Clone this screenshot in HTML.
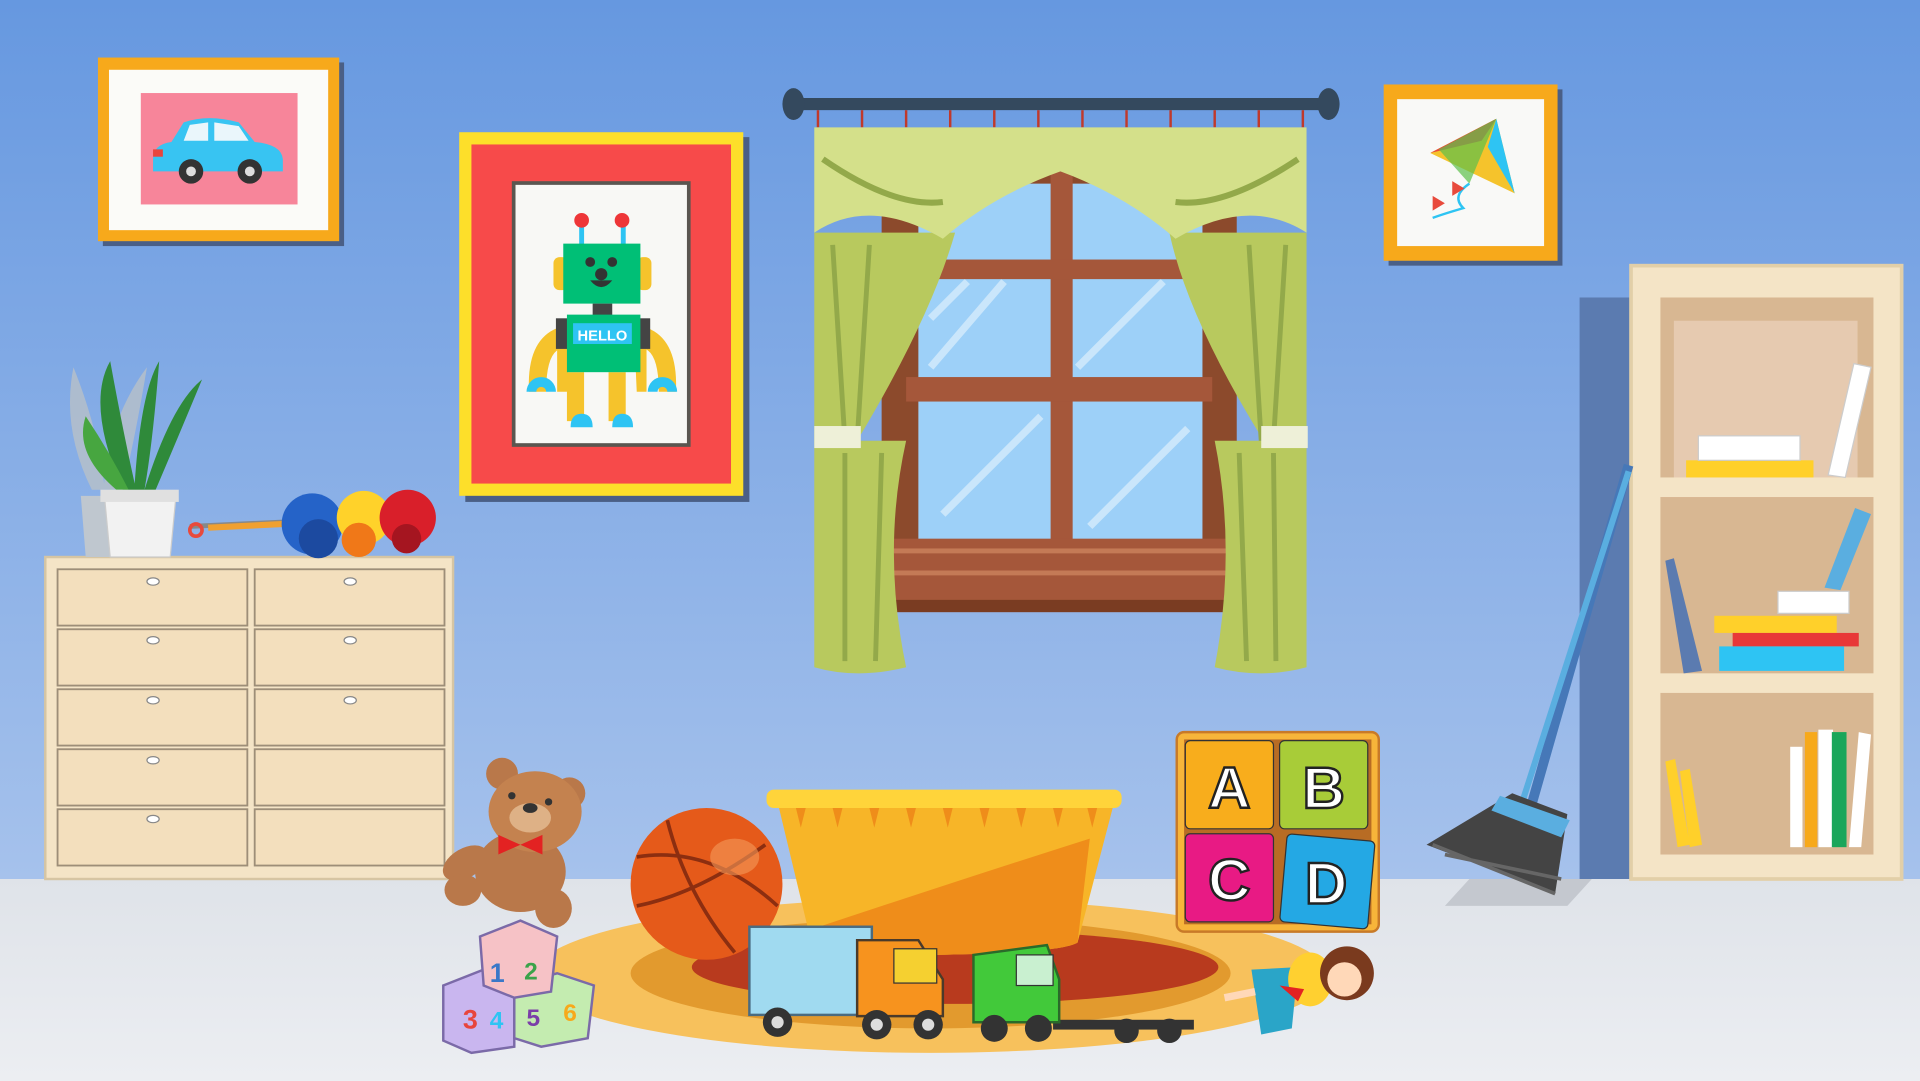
<!DOCTYPE html>
<html><head><meta charset="utf-8"><style>
html,body{margin:0;padding:0;width:1920px;height:1081px;overflow:hidden;background:#e6e9ee}
svg{display:block}
text{font-family:"Liberation Sans",sans-serif;font-weight:bold}
</style></head><body>
<svg width="1920" height="1081" viewBox="0 0 1568 883" preserveAspectRatio="none" xmlns="http://www.w3.org/2000/svg">
<defs>
<linearGradient id="wall" x1="0" y1="0" x2="0" y2="1"><stop offset="0" stop-color="#6698e0"/><stop offset="1" stop-color="#a6c2ec"/></linearGradient>
<linearGradient id="floor" x1="0" y1="0" x2="0" y2="1"><stop offset="0" stop-color="#dfe3e9"/><stop offset="1" stop-color="#eceef2"/></linearGradient>
</defs>
<rect width="1568" height="720" fill="url(#wall)"/>
<rect y="718" width="1568" height="165" fill="url(#floor)"/>

<!-- car frame -->
<rect x="84" y="51" width="197" height="150" fill="#4a5f86"/>
<rect x="80" y="47" width="197" height="150" fill="#f7a91b"/>
<rect x="89" y="57" width="179" height="131" fill="#fbfbf8"/>
<rect x="115" y="76" width="128" height="91" fill="#f7859a"/>
<path d="M125 130 Q125 118 140 116 L150 100 Q170 93 195 100 L208 116 Q230 118 231 130 L231 140 L125 140Z" fill="#38c4f2"/>
<path d="M155 102 L170 100 L170 115 L150 115Z M175 100 L195 103 L203 115 L175 115Z" fill="#eaf6fb"/>
<rect x="125" y="122" width="8" height="6" fill="#e8453c"/>
<circle cx="156" cy="140" r="10" fill="#333"/><circle cx="156" cy="140" r="4" fill="#ddd"/>
<circle cx="204" cy="140" r="10" fill="#333"/><circle cx="204" cy="140" r="4" fill="#ddd"/>

<!-- robot frame -->
<rect x="380" y="112" width="232" height="298" fill="#4a5f86"/>
<rect x="375" y="108" width="232" height="297" fill="#fddf2a"/>
<rect x="385" y="118" width="212" height="277" fill="#f74a4a"/>
<rect x="418" y="148" width="146" height="217" fill="#5a5650"/>
<rect x="421" y="151" width="140" height="211" fill="#f8f8f5"/>
<line x1="583" y1="0" x2="583" y2="0"/>
<rect x="473" y="185" width="4" height="15" fill="#2ec4f3"/><rect x="507" y="185" width="4" height="15" fill="#2ec4f3"/>
<circle cx="475" cy="180" r="6" fill="#ee3638"/><circle cx="508" cy="180" r="6" fill="#ee3638"/>
<rect x="452" y="210" width="12" height="27" rx="5" fill="#f5c32c"/><rect x="520" y="210" width="12" height="27" rx="5" fill="#f5c32c"/>
<rect x="460" y="199" width="63" height="49" fill="#00bf76"/>
<circle cx="482" cy="214" r="4" fill="#333"/><circle cx="500" cy="214" r="4" fill="#333"/><circle cx="491" cy="224" r="5" fill="#333"/>
<path d="M482 229 Q491 240 500 229Z" fill="#333"/>
<rect x="484" y="248" width="16" height="10" fill="#444"/>
<path d="M455 320 L455 275 Q455 260 465 260 L465 275 L463 320Z M528 320 L528 275 Q528 260 518 260 L518 275 L520 320Z" fill="#f5c32c"/>
<path d="M432 320 Q430 278 455 268 L457 285 Q446 290 446 320Z M552 320 Q554 278 529 268 L527 285 Q538 290 538 320Z" fill="#f5c32c"/>
<rect x="454" y="260" width="10" height="25" fill="#444"/><rect x="521" y="260" width="10" height="25" fill="#444"/>
<rect x="463" y="304" width="14" height="40" fill="#f5c32c"/><rect x="497" y="304" width="14" height="40" fill="#f5c32c"/>
<path d="M430 320 A12 12 0 0 1 454 320 L446 320 A4 4 0 0 0 438 320Z M529 320 A12 12 0 0 1 553 320 L545 320 A4 4 0 0 0 537 320Z" fill="#2ec4f3"/>
<path d="M466 349 Q466 338 475 338 Q484 338 484 349Z M500 349 Q500 338 508 338 Q517 338 517 349Z" fill="#2ec4f3"/>
<rect x="463" y="257" width="60" height="47" fill="#00bf76"/>
<rect x="468" y="264" width="48" height="17" fill="#2ec4f3"/>
<text x="492" y="278" font-size="12" fill="#fff" text-anchor="middle">HELLO</text>

<!-- kite frame -->
<rect x="1134" y="73" width="142" height="144" fill="#4a5f86"/>
<rect x="1130" y="69" width="142" height="144" fill="#f7a91b"/>
<rect x="1141" y="81" width="120" height="120" fill="#f9f9f7"/>
<path d="M1168 125 L1222 97 L1237 158Z" fill="#f5c32c"/>
<path d="M1168 125 L1222 97 L1210 115Z" fill="#e84a3c"/>
<path d="M1222 97 L1237 158 L1215 120Z" fill="#2ec4f3"/>
<path d="M1175 122 L1222 97 L1200 150Z" fill="#5cc14a" opacity="0.7"/>
<path d="M1200 150 Q1185 160 1195 170 Q1178 175 1170 178" stroke="#2ec4f3" stroke-width="2" fill="none"/>
<path d="M1170 160 l10 6 -10 6z M1186 148 l10 6 -10 6z" fill="#e84a3c"/>

<!-- curtain rod -->
<rect x="645" y="80" width="443" height="10" rx="4" fill="#34495e"/>
<ellipse cx="648" cy="85" rx="9" ry="13" fill="#34495e"/><ellipse cx="1085" cy="85" rx="9" ry="13" fill="#34495e"/>
<g stroke="#c0392b" stroke-width="2"><line x1="668" y1="90" x2="668" y2="104"/><line x1="704" y1="90" x2="704" y2="104"/><line x1="740" y1="90" x2="740" y2="104"/><line x1="776" y1="90" x2="776" y2="104"/><line x1="812" y1="90" x2="812" y2="104"/><line x1="848" y1="90" x2="848" y2="104"/><line x1="884" y1="90" x2="884" y2="104"/><line x1="920" y1="90" x2="920" y2="104"/><line x1="956" y1="90" x2="956" y2="104"/><line x1="992" y1="90" x2="992" y2="104"/><line x1="1028" y1="90" x2="1028" y2="104"/><line x1="1064" y1="90" x2="1064" y2="104"/></g>

<!-- window -->
<rect x="720" y="140" width="290" height="330" fill="#8c4a2c"/>
<rect x="750" y="150" width="232" height="292" fill="#9dd0f8"/>
<g stroke="#d6ecfc" stroke-width="6" opacity="0.8"><line x1="760" y1="300" x2="820" y2="230"/><line x1="770" y1="420" x2="850" y2="340"/><line x1="880" y1="300" x2="950" y2="230"/><line x1="890" y1="430" x2="970" y2="350"/><line x1="760" y1="260" x2="790" y2="230"/></g>
<rect x="858" y="140" width="18" height="305" fill="#a5573a"/>
<rect x="740" y="212" width="250" height="16" fill="#a5573a"/>
<rect x="740" y="308" width="250" height="20" fill="#a5573a"/>
<rect x="728" y="440" width="275" height="60" fill="#a5573a"/>
<rect x="728" y="448" width="275" height="4" fill="#c47a56"/>
<rect x="728" y="466" width="275" height="4" fill="#c47a56"/>
<rect x="728" y="490" width="275" height="10" fill="#7a3c22"/>

<!-- curtains -->
<path d="M665 190 L665 545 Q700 555 740 545 Q720 450 740 360 L700 360 Q760 260 780 190Z" fill="#b8c95e"/>
<path d="M680 200 L690 360 M710 200 L700 360 M690 370 L690 540 M720 370 L715 540" stroke="#93a94a" stroke-width="4" fill="none"/>
<path d="M1067 190 L1067 545 Q1030 555 992 545 Q1010 450 992 360 L1032 360 Q970 260 955 190Z" fill="#b8c95e"/>
<path d="M1050 200 L1040 360 M1020 200 L1030 360 M1040 370 L1042 540 M1012 370 L1018 540" stroke="#93a94a" stroke-width="4" fill="none"/>
<rect x="665" y="348" width="38" height="18" fill="#eef0d8"/><rect x="1030" y="348" width="38" height="18" fill="#eef0d8"/>
<path d="M665 104 L1067 104 L1067 190 Q1020 160 960 195 Q920 160 866 140 Q810 160 770 195 Q710 160 665 190Z" fill="#d4e08a"/>
<path d="M672 130 Q730 170 770 165 M1060 130 Q1000 170 960 165" stroke="#93a94a" stroke-width="5" fill="none"/>

<!-- bookshelf -->
<rect x="1290" y="243" width="45" height="475" fill="#5b7bb0"/>
<rect x="1332" y="217" width="221" height="501" fill="#f4e4c6" stroke="#e2cfa8" stroke-width="3"/>
<rect x="1356" y="243" width="174" height="455" fill="#d8b792"/>
<rect x="1367" y="262" width="150" height="130" fill="#e6cab0"/>
<rect x="1340" y="390" width="205" height="16" fill="#f4e4c6"/>
<rect x="1340" y="550" width="205" height="16" fill="#f4e4c6"/>
<rect x="1377" y="376" width="104" height="14" fill="#ffd02a"/>
<rect x="1387" y="356" width="83" height="20" fill="#fff" stroke="#ccc"/>
<path d="M1493 388 L1514 297 L1528 300 L1507 390Z" fill="#fff" stroke="#ccc"/>
<path d="M1375 550 L1360 458 L1367 456 L1390 548Z" fill="#5b7bb0"/>
<rect x="1400" y="503" width="100" height="14" fill="#ffd02a"/>
<rect x="1415" y="517" width="103" height="11" fill="#e83838"/>
<rect x="1404" y="528" width="102" height="20" fill="#2ec4f3"/>
<rect x="1452" y="483" width="58" height="18" fill="#fff" stroke="#ccc"/>
<path d="M1490 480 L1515 415 L1528 420 L1503 482Z" fill="#5aaee0"/>
<path d="M1370 692 L1360 622 L1368 620 L1380 690Z M1380 692 L1372 630 L1380 628 L1390 690Z" fill="#ffd02a"/>
<rect x="1462" y="610" width="10" height="82" fill="#fff"/><rect x="1474" y="598" width="10" height="94" fill="#f7a91b"/>
<rect x="1485" y="596" width="12" height="96" fill="#fff"/><rect x="1496" y="598" width="12" height="94" fill="#1aa65a"/>
<path d="M1510 692 L1518 598 L1528 600 L1520 692Z" fill="#fff"/>

<!-- broom -->
<polygon points="1200,718 1300,718 1280,740 1180,740" fill="#c4c8cf"/>
<line x1="1330" y1="380" x2="1250" y2="660" stroke="#4678b8" stroke-width="8"/>
<line x1="1330" y1="385" x2="1240" y2="665" stroke="#5aaee0" stroke-width="5"/>
<path d="M1235 648 L1280 665 L1270 730 L1165 690Z" fill="#444"/>
<path d="M1225 650 L1282 670 L1275 684 L1218 662Z" fill="#5aaee0"/>
<path d="M1170 690 L1270 730 M1180 698 L1275 718" stroke="#666" stroke-width="3"/>

<!-- dresser -->
<rect x="37" y="455" width="333" height="263" fill="#f4e4c6" stroke="#d6c5a3" stroke-width="2"/>
<g fill="#f3dfbd" stroke="#9d8e78" stroke-width="1.5">
<rect x="47" y="465" width="155" height="46"/><rect x="208" y="465" width="155" height="46"/>
<rect x="47" y="514" width="155" height="46"/><rect x="208" y="514" width="155" height="46"/>
<rect x="47" y="563" width="155" height="46"/><rect x="208" y="563" width="155" height="46"/>
<rect x="47" y="612" width="155" height="46"/><rect x="208" y="612" width="155" height="46"/>
<rect x="47" y="661" width="155" height="46"/><rect x="208" y="661" width="155" height="46"/>
</g>
<g fill="#fff" stroke="#888"><ellipse cx="125" cy="475" rx="5" ry="3"/><ellipse cx="286" cy="475" rx="5" ry="3"/><ellipse cx="125" cy="523" rx="5" ry="3"/><ellipse cx="286" cy="523" rx="5" ry="3"/><ellipse cx="125" cy="572" rx="5" ry="3"/><ellipse cx="286" cy="572" rx="5" ry="3"/><ellipse cx="125" cy="621" rx="5" ry="3"/><ellipse cx="125" cy="669" rx="5" ry="3"/></g>

<!-- plant -->
<path d="M66 405 L98 405 L94 455 L70 455Z" fill="#bfc7cf"/>
<path d="M75 400 Q50 350 60 300 Q80 350 85 395 Q90 340 120 300 Q110 360 100 400Z" fill="#b8c0c8" opacity="0.8"/>
<path d="M100 400 Q70 330 90 295 Q100 350 110 395 Q115 320 130 295 Q125 360 118 400 Q140 330 165 310 Q140 370 125 405Z" fill="#2f8a3a"/>
<path d="M95 400 Q60 370 70 340 Q90 370 105 400Z" fill="#47a640"/>
<path d="M85 402 L144 402 L139 455 L90 455Z" fill="#f2f2f2" stroke="#ccc"/>
<rect x="82" y="400" width="64" height="10" fill="#e0e0e0"/>

<!-- duster -->
<path d="M155 430 L240 426" stroke="#888" stroke-width="4"/>
<path d="M170 431 L232 428" stroke="#f0a030" stroke-width="5"/>
<circle cx="160" cy="433" r="5" fill="none" stroke="#e84a3c" stroke-width="3"/>
<circle cx="255" cy="428" r="25" fill="#2563c8"/><circle cx="260" cy="440" r="16" fill="#1c4aa0"/>
<circle cx="297" cy="423" r="22" fill="#ffd22a"/><circle cx="293" cy="441" r="14" fill="#f07818"/>
<circle cx="333" cy="423" r="23" fill="#d91f2a"/><circle cx="332" cy="440" r="12" fill="#a51520"/>

<!-- rug -->
<ellipse cx="760" cy="797" rx="325" ry="63" fill="#f7c15c"/>
<ellipse cx="760" cy="795" rx="245" ry="45" fill="#e29a2e"/>
<ellipse cx="780" cy="790" rx="215" ry="30" fill="#b83a1e"/>

<!-- basket -->
<path d="M635 655 L910 655 L880 770 Q860 782 665 780 Z" fill="#f7b528"/>
<path d="M660 760 Q780 720 890 685 L880 770 Q860 782 665 780Z" fill="#ef8d1a"/>
<rect x="626" y="645" width="290" height="15" rx="6" fill="#ffd43a"/>
<g fill="#ef8d1a"><path d="M650 660 l4 16 4-16z M680 660 l4 16 4-16z M710 660 l4 16 4-16z M740 660 l4 16 4-16z M770 660 l4 16 4-16z M800 660 l4 16 4-16z M830 660 l4 16 4-16z M860 660 l4 16 4-16z M888 660 l4 16 4-16z"/></g>

<!-- ball -->
<circle cx="577" cy="722" r="62" fill="#e55a1a"/>
<path d="M520 700 Q580 690 635 740 M545 670 Q560 730 600 778 M520 740 Q570 730 625 690" stroke="#8c2e10" stroke-width="3" fill="none"/>
<ellipse cx="600" cy="700" rx="20" ry="15" fill="#f49a5a" opacity="0.6"/>

<!-- teddy -->
<circle cx="410" cy="632" r="13" fill="#b9784a"/><circle cx="465" cy="648" r="13" fill="#b9784a"/>
<ellipse cx="425" cy="712" rx="37" ry="33" fill="#b9784a"/>
<ellipse cx="380" cy="705" rx="20" ry="12" fill="#b9784a" transform="rotate(-30 380 705)"/>
<ellipse cx="378" cy="727" rx="15" ry="13" fill="#b9784a"/><ellipse cx="452" cy="742" rx="15" ry="16" fill="#b9784a"/>
<ellipse cx="437" cy="663" rx="38" ry="33" fill="#c4824f"/>
<ellipse cx="433" cy="668" rx="17" ry="12" fill="#deb186"/>
<ellipse cx="433" cy="660" rx="6" ry="4" fill="#333"/>
<circle cx="418" cy="650" r="3" fill="#333"/><circle cx="448" cy="655" r="3" fill="#333"/>
<path d="M407 682 L425 690 L407 698Z M443 682 L425 690 L443 698Z" fill="#e32222"/>

<!-- blocks -->
<g stroke="#7b6aa8" stroke-width="2">
<path d="M362 805 L395 792 L420 805 L420 855 L385 860 L362 850Z" fill="#c9b6ef"/>
<path d="M420 805 L455 795 L485 805 L480 848 L442 855 L420 848Z" fill="#c4ecb0"/>
<path d="M392 765 L425 752 L455 765 L450 810 L420 815 L395 805Z" fill="#f6c2c6"/>
</g>
<text x="378" y="840" font-size="22" fill="#e8453c">3</text><text x="400" y="840" font-size="20" fill="#2ec4f3">4</text>
<text x="430" y="838" font-size="20" fill="#7b3fa8">5</text><text x="460" y="834" font-size="20" fill="#f7a91b">6</text>
<text x="400" y="802" font-size="22" fill="#3a78c8">1</text><text x="428" y="800" font-size="20" fill="#3aa34a">2</text>

<!-- ABC -->
<rect x="961" y="598" width="165" height="163" rx="6" fill="#f7b53a" stroke="#c87a28" stroke-width="2"/>
<rect x="967" y="604" width="153" height="151" fill="#b86c24"/>
<rect x="968" y="605" width="72" height="72" rx="4" fill="#f8ad1c" stroke="#333"/>
<rect x="1045" y="605" width="72" height="72" rx="4" fill="#a8cc38" stroke="#333"/>
<rect x="968" y="681" width="72" height="72" rx="4" fill="#e81a84" stroke="#333"/>
<rect x="1048" y="684" width="72" height="72" rx="4" fill="#24a8e4" stroke="#333" transform="rotate(5 1084 720)"/>
<g font-size="48" fill="#fff" stroke="#222" stroke-width="2" text-anchor="middle">
<text x="1004" y="660">A</text><text x="1081" y="660">B</text><text x="1004" y="735">C</text><text x="1083" y="738">D</text></g>

<!-- trucks -->
<rect x="612" y="757" width="100" height="72" fill="#a0daf0" stroke="#4a6b80" stroke-width="2"/>
<path d="M700 768 L750 768 L770 800 L770 830 L700 830Z" fill="#f7931e" stroke="#4a3a2a" stroke-width="2"/>
<rect x="730" y="775" width="35" height="28" fill="#f5d030" stroke="#333"/>
<circle cx="635" cy="835" r="12" fill="#333"/><circle cx="716" cy="837" r="12" fill="#333"/><circle cx="758" cy="837" r="12" fill="#333"/>
<circle cx="635" cy="835" r="5" fill="#ddd"/><circle cx="716" cy="837" r="5" fill="#ddd"/><circle cx="758" cy="837" r="5" fill="#ddd"/>
<rect x="860" y="833" width="115" height="8" fill="#333"/>
<path d="M795 780 L855 772 L865 800 L865 835 L795 835Z" fill="#42c93a" stroke="#2a6a2a" stroke-width="2"/>
<rect x="830" y="780" width="30" height="25" fill="#c9f0d0" stroke="#333"/>
<circle cx="812" cy="840" r="11" fill="#333"/><circle cx="848" cy="840" r="11" fill="#333"/><circle cx="920" cy="842" r="10" fill="#333"/><circle cx="955" cy="842" r="10" fill="#333"/>

<!-- doll -->
<path d="M1022 792 L1060 790 L1055 840 L1030 845Z" fill="#2aa5c8"/>
<ellipse cx="1070" cy="800" rx="18" ry="22" fill="#ffd030"/>
<circle cx="1100" cy="795" r="22" fill="#7a3a1e"/>
<circle cx="1098" cy="800" r="14" fill="#ffd8b8"/>
<path d="M1045 805 L1065 808 L1060 818Z" fill="#e32222"/>
<path d="M1000 815 L1025 810" stroke="#ffd8b8" stroke-width="6"/>
</svg>
</body></html>
